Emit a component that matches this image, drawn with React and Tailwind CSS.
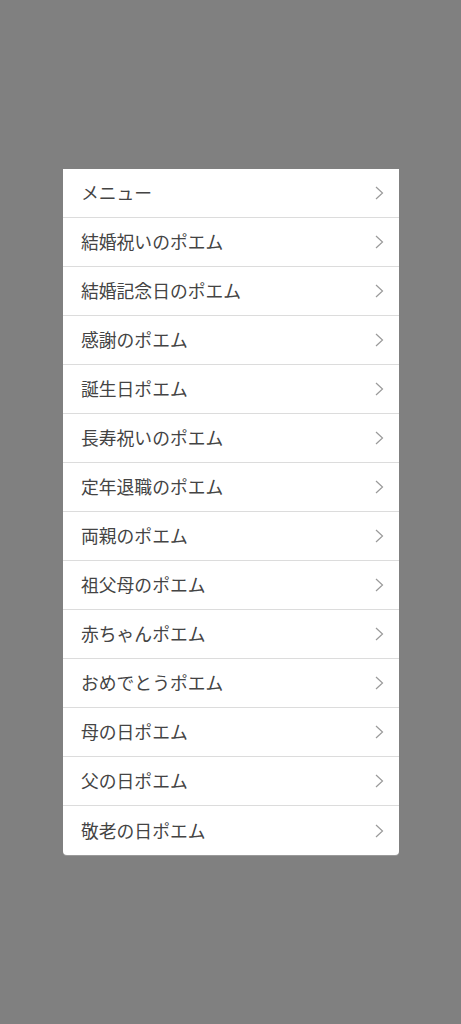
import React from "react";

const items = [
  "メニュー",
  "結婚祝いのポエム",
  "結婚記念日のポエム",
  "感謝のポエム",
  "誕生日ポエム",
  "長寿祝いのポエム",
  "定年退職のポエム",
  "両親のポエム",
  "祖父母のポエム",
  "赤ちゃんポエム",
  "おめでとうポエム",
  "母の日ポエム",
  "父の日ポエム",
  "敬老の日ポエム",
];

function Chevron() {
  return (
    <svg width="9" height="14" viewBox="0 0 9 14" fill="none" className="shrink-0">
      <path d="M1 1l6.5 6L1 13" stroke="#9a9a9a" strokeWidth="1.2" />
    </svg>
  );
}

export default function App() {
  return (
    <div
      className="w-[461px] h-[1024px] bg-[#808080] pt-[169px] pl-[63px]"
      style={{ fontFamily: '"Noto Sans CJK JP", "Noto Sans", sans-serif' }}
    >
      <div className="w-[336px] bg-white rounded-b-[4px] overflow-hidden shadow-[0_1px_0_#9a9a9a]">
        {items.map((t, i) => (
          <div
            key={i}
            className={`flex items-center justify-between h-[49px] pl-[18px] pr-[15px] ${
              i < items.length - 1 ? "border-b border-[#dcdcdc]" : ""
            }`}
          >
            <span className="text-[17.8px] text-[#444444] leading-none">{t}</span>
            <Chevron />
          </div>
        ))}
      </div>
    </div>
  );
}
